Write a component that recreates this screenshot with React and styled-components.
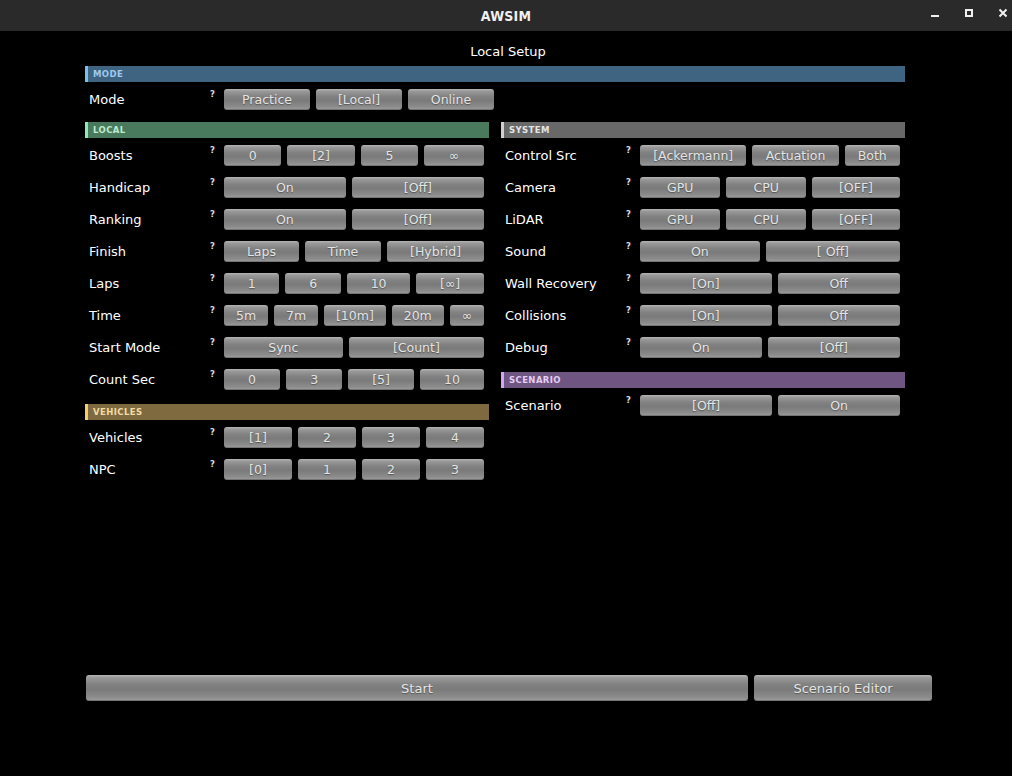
import React from 'react';
import styled, { createGlobalStyle } from 'styled-components';

const GlobalStyle = createGlobalStyle`
  html, body {
    margin: 0;
    padding: 0;
    background: #000000;
  }
  body {
    font-family: "DejaVu Sans", "Liberation Sans", sans-serif;
    color: #ffffff;
  }
`;

const Window = styled.div`
  display: flex;
  flex-direction: column;
  height: 100vh;
  background: #000000;
`;

const TitleBar = styled.div`
  position: relative;
  height: 31px;
  background: #2a2a2a;
  display: flex;
  align-items: center;
  justify-content: center;
  flex-shrink: 0;
`;

const AppName = styled.div`
  font-family: "DejaVu Sans Condensed", "DejaVu Sans", sans-serif;
  font-weight: 700;
  font-size: 14px;
  color: #f0f0f0;
  letter-spacing: 0.2px;
`;

const WindowControls = styled.div`
  position: absolute;
  right: 1px;
  top: 0;
  height: 31px;
  padding-top: 5px;
  box-sizing: border-box;
  display: flex;
  align-items: flex-start;
  gap: 18px;
`;

const ControlIcon = styled.svg`
  width: 16px;
  height: 16px;
  display: block;
`;

const PageTitle = styled.div`
  text-align: center;
  font-size: 13px;
  line-height: 16px;
  padding: 13px 0 0 4px;
  margin-bottom: 6px;
  color: #ffffff;
`;

const Content = styled.div`
  padding: 0 107px 0 85px;
`;

const Columns = styled.div`
  display: grid;
  grid-template-columns: 1fr 1fr;
  column-gap: 12px;
  margin-top: 12px;
`;

const Column = styled.div`
  display: flex;
  flex-direction: column;
  gap: 14px;
`;

const Section = styled.section`
  display: flex;
  flex-direction: column;
`;

const SectionHeader = styled.div`
  height: 16px;
  background: ${(p) => p.$bg};
  border-left: 3px solid ${(p) => p.$accent};
  color: ${(p) => p.$fg};
  font-size: 8.5px;
  font-weight: 700;
  letter-spacing: 0.4px;
  line-height: 16px;
  padding-left: 5px;
  margin-bottom: 7px;
`;

const Rows = styled.div`
  display: flex;
  flex-direction: column;
  gap: 11px;
`;

const Row = styled.div`
  display: flex;
  align-items: center;
  height: 21px;
  padding: 0 5px 0 4px;
`;

const Label = styled.div`
  width: 121px;
  flex-shrink: 0;
  font-size: 13px;
  color: #ffffff;
  margin-top: -1px;
`;

const Help = styled.div`
  width: 14px;
  flex-shrink: 0;
  align-self: flex-start;
  font-size: 8.5px;
  font-weight: 700;
  color: #dddddd;
  line-height: 10px;
`;

const ButtonGroup = styled.div`
  display: flex;
  gap: 6px;
  ${(p) => (p.$equal ? 'width: 270px;' : 'flex: 1;')}
`;

const OptionButton = styled.div`
  flex: ${(p) => (p.$equal ? '1 1 0' : '1 1 auto')};
  height: ${(p) => (p.$big ? '26px' : '21px')};
  padding: 0 11px;
  box-sizing: border-box;
  border-radius: 3px;
  background: linear-gradient(
    to bottom,
    #b6b6b6 0%,
    #9a9a9a 10%,
    #828282 35%,
    #7a7a7a 55%,
    #8c8c8c 85%,
    #9e9e9e 100%
  );
  box-shadow: inset 0 -1px 0 rgba(0, 0, 0, 0.25);
  color: #e4e4e4;
  font-size: ${(p) => (p.$big ? '13px' : '12.5px')};
  display: flex;
  align-items: center;
  justify-content: center;
  white-space: nowrap;
  text-shadow: 0 1px 1px rgba(0, 0, 0, 0.35);
`;

const BottomBar = styled.div`
  margin-top: auto;
  display: flex;
  gap: 6px;
  padding: 0 80px 75px 86px;
`;

const StartButton = styled(OptionButton)`
  flex: 0 0 662px;
`;

const EditorButton = styled(OptionButton)`
  flex: 0 0 178px;
`;

const HEADERS = {
  mode: { bg: '#3e6482', accent: '#78bff0', fg: '#9fc9ee' },
  local: { bg: '#4a7a5d', accent: '#8ee8b4', fg: '#bdeccd' },
  system: { bg: '#686868', accent: '#d0d0d0', fg: '#e4e4e4' },
  vehicles: { bg: '#7e6a3e', accent: '#f2cb72', fg: '#f2dca4' },
  scenario: { bg: '#6e5582', accent: '#d6a4f4', fg: '#e6cdf4' },
};

const leftSections = [
  {
    key: 'local',
    title: 'LOCAL',
    rows: [
      ['Boosts', ['0', '[2]', '5', '∞']],
      ['Handicap', ['On', '[Off]']],
      ['Ranking', ['On', '[Off]']],
      ['Finish', ['Laps', 'Time', '[Hybrid]']],
      ['Laps', ['1', '6', '10', '[∞]']],
      ['Time', ['5m', '7m', '[10m]', '20m', '∞']],
      ['Start Mode', ['Sync', '[Count]']],
      ['Count Sec', ['0', '3', '[5]', '10']],
    ],
  },
  {
    key: 'vehicles',
    title: 'VEHICLES',
    rows: [
      ['Vehicles', ['[1]', '2', '3', '4']],
      ['NPC', ['[0]', '1', '2', '3']],
    ],
  },
];

const rightSections = [
  {
    key: 'system',
    title: 'SYSTEM',
    rows: [
      ['Control Src', ['[Ackermann]', 'Actuation', 'Both']],
      ['Camera', ['GPU', 'CPU', '[OFF]']],
      ['LiDAR', ['GPU', 'CPU', '[OFF]']],
      ['Sound', ['On', '[ Off]']],
      ['Wall Recovery', ['[On]', 'Off']],
      ['Collisions', ['[On]', 'Off']],
      ['Debug', ['On', '[Off]']],
    ],
  },
  {
    key: 'scenario',
    title: 'SCENARIO',
    rows: [['Scenario', ['[Off]', 'On']]],
  },
];

const SettingRow = ({ label, options, equal }) => (
  <Row>
    <Label>{label}</Label>
    <Help>?</Help>
    <ButtonGroup $equal={equal}>
      {options.map((o, i) => (
        <OptionButton key={i} $equal={equal}>
          {o}
        </OptionButton>
      ))}
    </ButtonGroup>
  </Row>
);

const SettingSection = ({ section }) => {
  const h = HEADERS[section.key];
  return (
    <Section>
      <SectionHeader $bg={h.bg} $accent={h.accent} $fg={h.fg}>
        {section.title}
      </SectionHeader>
      <Rows>
        {section.rows.map(([label, options]) => (
          <SettingRow key={label} label={label} options={options} />
        ))}
      </Rows>
    </Section>
  );
};

const App = () => {
  return (
    <Window>
      <GlobalStyle />
      <TitleBar>
        <AppName>AWSIM</AppName>
        <WindowControls>
          <ControlIcon viewBox="0 0 16 16">
            <rect x="4" y="10" width="8" height="2" fill="#f0f0f0" />
          </ControlIcon>
          <ControlIcon viewBox="0 0 16 16">
            <rect x="5" y="5" width="6" height="6" fill="none" stroke="#f0f0f0" strokeWidth="2" />
          </ControlIcon>
          <ControlIcon viewBox="0 0 16 16">
            <path d="M4.5 4.5 L11.5 11.5 M11.5 4.5 L4.5 11.5" stroke="#f0f0f0" strokeWidth="2" />
          </ControlIcon>
        </WindowControls>
      </TitleBar>

      <PageTitle>Local Setup</PageTitle>

      <Content>
        <Section>
          <SectionHeader $bg={HEADERS.mode.bg} $accent={HEADERS.mode.accent} $fg={HEADERS.mode.fg}>
            MODE
          </SectionHeader>
          <SettingRow label="Mode" options={['Practice', '[Local]', 'Online']} equal />
        </Section>

        <Columns>
          <Column>
            {leftSections.map((s) => (
              <SettingSection key={s.key} section={s} />
            ))}
          </Column>
          <Column>
            {rightSections.map((s) => (
              <SettingSection key={s.key} section={s} />
            ))}
          </Column>
        </Columns>
      </Content>

      <BottomBar>
        <StartButton $big>Start</StartButton>
        <EditorButton $big>Scenario Editor</EditorButton>
      </BottomBar>
    </Window>
  );
};

export default App;
